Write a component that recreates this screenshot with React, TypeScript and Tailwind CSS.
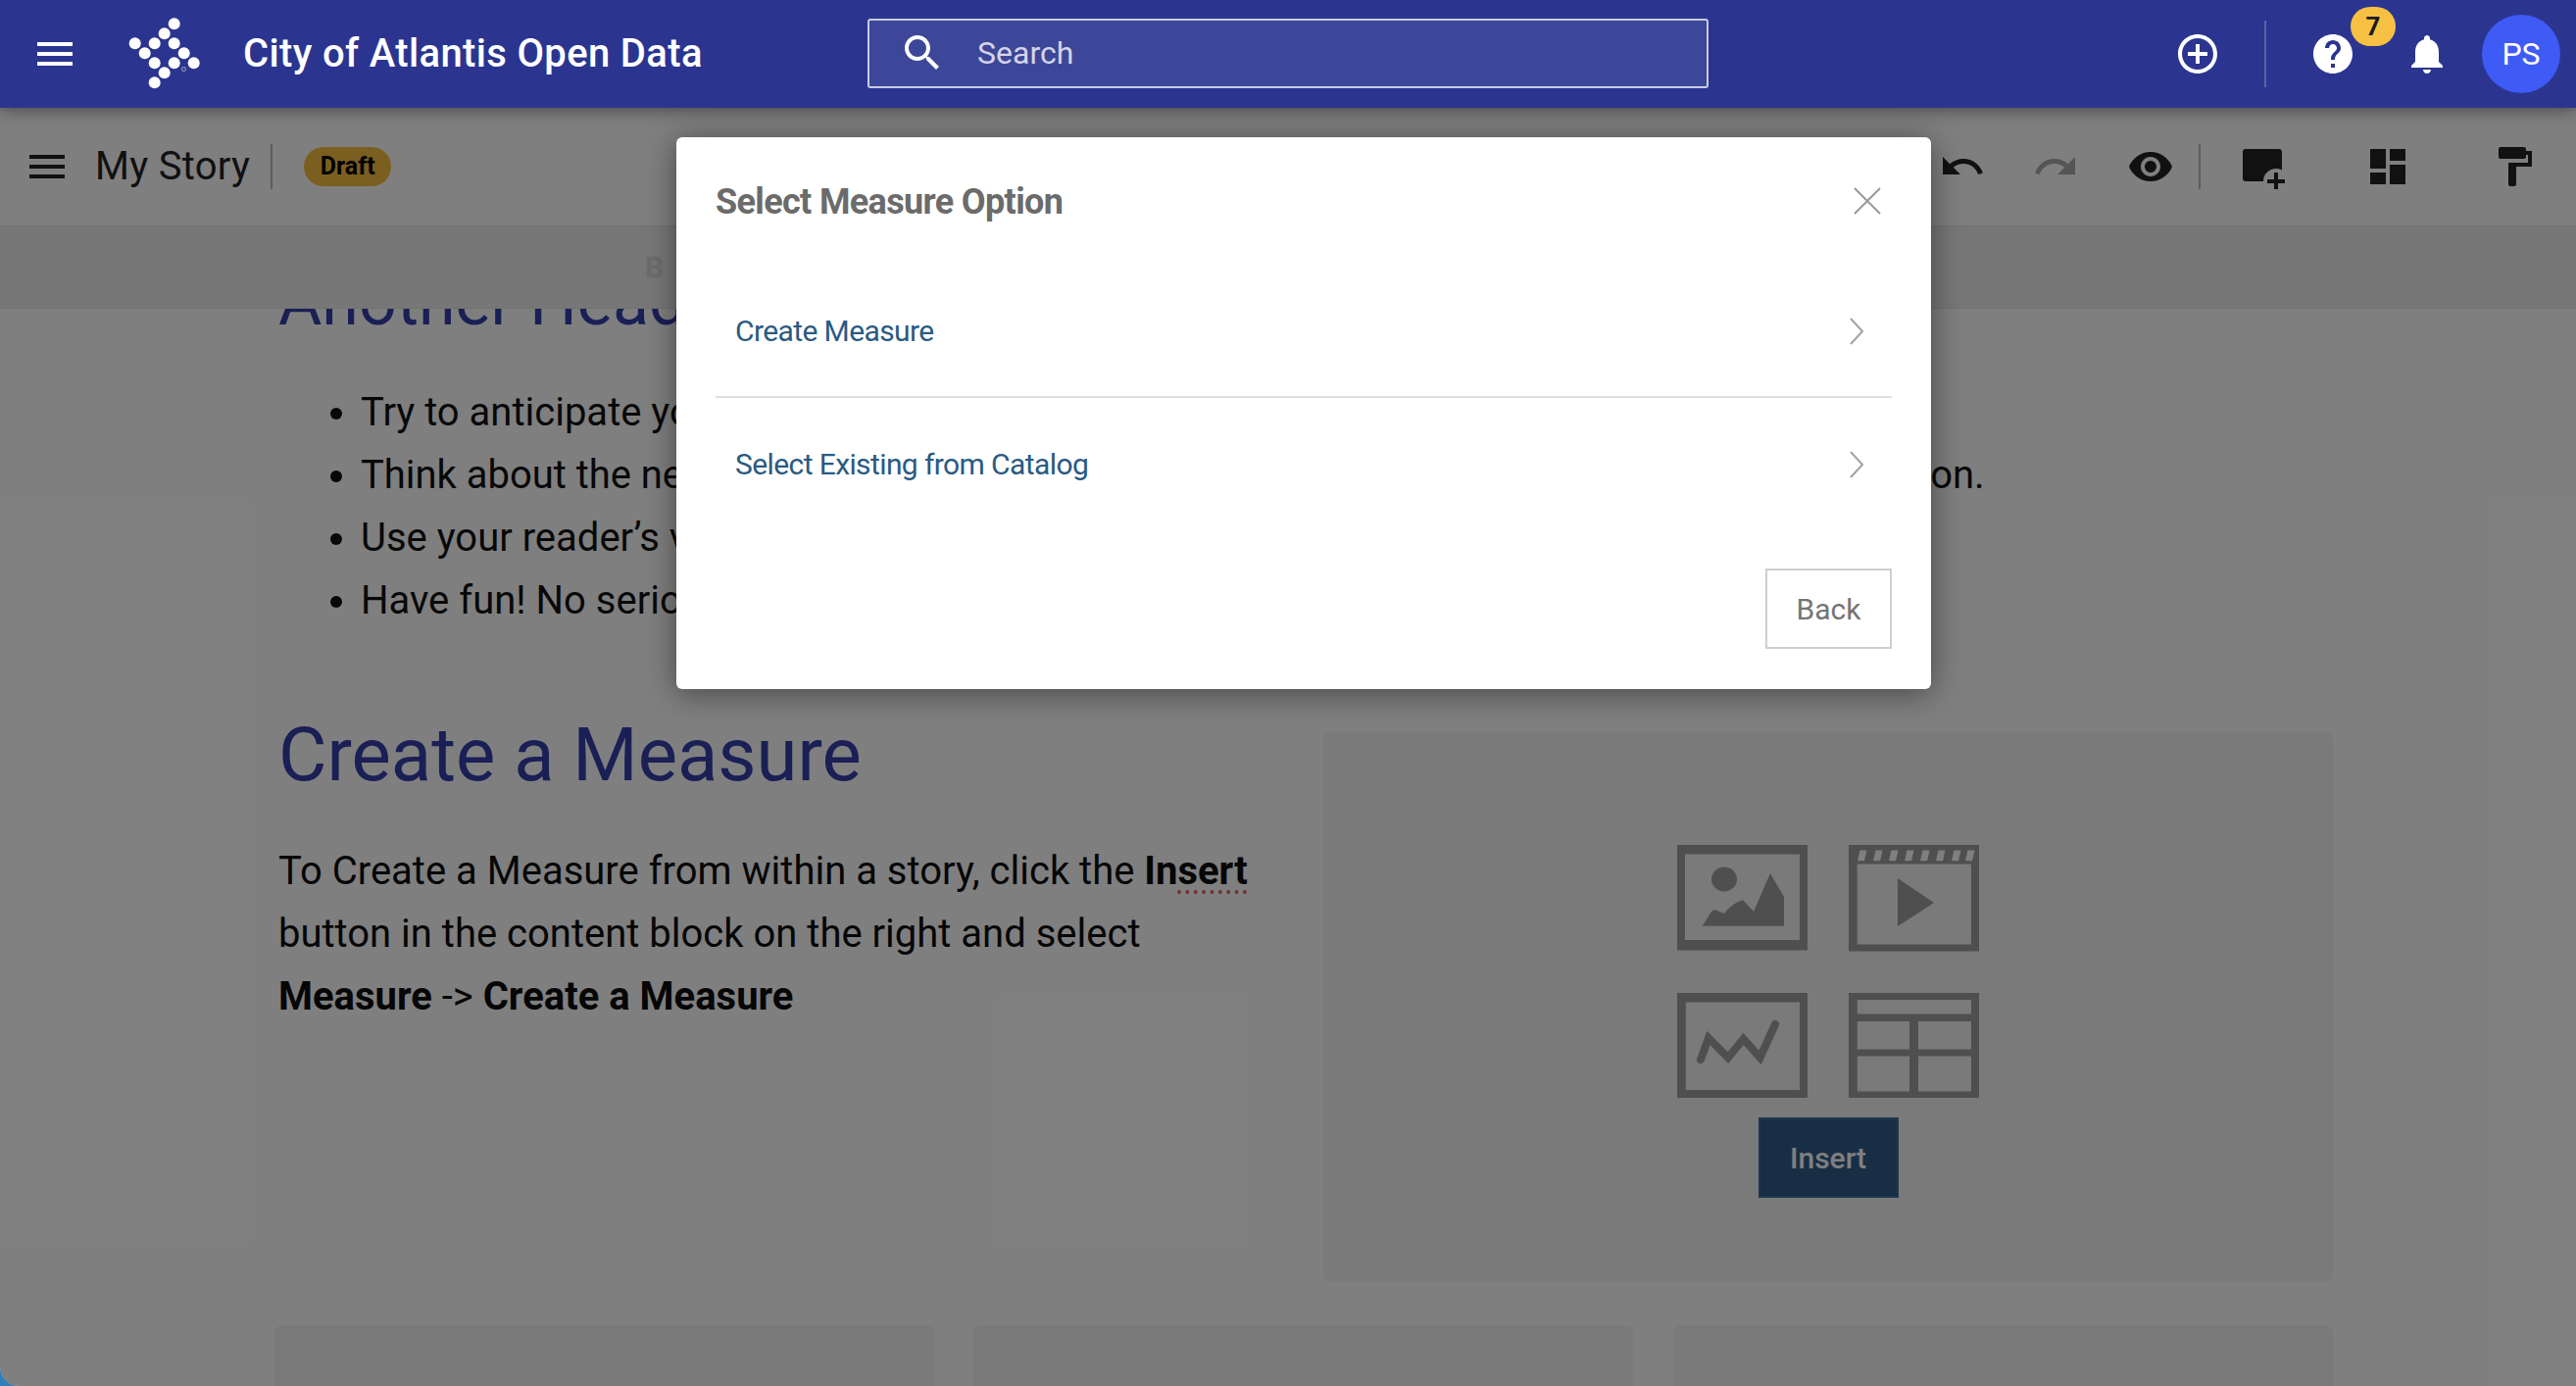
import React from "react";

type IconProps = { d: string; className?: string; size?: number };

const Icon = ({ d, className = "", size = 48 }: IconProps) => (
  <svg viewBox="0 0 24 24" width={size} height={size} fill="currentColor" className={`shrink-0 ${className}`}>
    <path d={d} />
  </svg>
);

const MENU = "M3 18h18v-2H3v2zm0-5h18v-2H3v2zm0-7v2h18V6H3z";
const SEARCH =
  "M15.5 14h-.79l-.28-.27C15.41 12.59 16 11.11 16 9.5 16 5.91 13.09 3 9.5 3S3 5.91 3 9.5 5.91 16 9.5 16c1.61 0 3.09-.59 4.23-1.57l.27.28v.79l5 4.99L20.49 19l-4.99-5zm-6 0C7.01 14 5 11.99 5 9.5S7.01 5 9.5 5 14 7.01 14 9.5 11.99 14 9.5 14z";
const ADD_CIRCLE =
  "M13 7h-2v4H7v2h4v4h2v-4h4v-2h-4V7zm-1-5C6.48 2 2 6.48 2 12s4.48 10 10 10 10-4.48 10-10S17.52 2 12 2zm0 18c-4.41 0-8-3.59-8-8s3.59-8 8-8 8 3.59 8 8-3.59 8-8 8z";
const HELP =
  "M12 2C6.48 2 2 6.48 2 12s4.48 10 10 10 10-4.48 10-10S17.52 2 12 2zm1 17h-2v-2h2v2zm2.07-7.75l-.9.92C13.45 12.9 13 13.5 13 15h-2v-.5c0-1.1.45-2.1 1.17-2.83l1.24-1.26c.37-.36.59-.86.59-1.41 0-1.1-.9-2-2-2s-2 .9-2 2H8c0-2.21 1.79-4 4-4s4 1.79 4 4c0 .88-.36 1.68-.93 2.25z";
const BELL =
  "M12 22c1.1 0 2-.9 2-2h-4c0 1.1.89 2 2 2zm6-6v-5c0-3.07-1.64-5.64-4.5-6.32V4c0-.83-.67-1.5-1.5-1.5s-1.5.67-1.5 1.5v.68C7.63 5.36 6 7.92 6 11v5l-2 2v1h16v-1l-2-2z";
const UNDO =
  "M12.5 8c-2.65 0-5.05.99-6.9 2.6L2 7v9h9l-3.62-3.62c1.39-1.16 3.16-1.88 5.12-1.88 3.54 0 6.55 2.31 7.6 5.5l2.37-.78C21.08 11.03 17.15 8 12.5 8z";
const REDO =
  "M18.4 10.6C16.55 8.99 14.15 8 11.5 8c-4.65 0-8.58 3.03-9.96 7.22L3.9 16c1.05-3.19 4.05-5.5 7.6-5.5 1.95 0 3.73.72 5.12 1.88L13 16h9V7l-3.6 3.6z";
const EYE =
  "M12 4.5C7 4.5 2.73 7.61 1 12c1.73 4.39 6 7.5 11 7.5s9.27-3.11 11-7.5c-1.73-4.39-6-7.5-11-7.5zM12 17c-2.76 0-5-2.24-5-5s2.24-5 5-5 5 2.24 5 5-2.24 5-5 5zm0-8c-1.66 0-3 1.34-3 3s1.34 3 3 3 3-1.34 3-3-1.34-3-3-3z";
const DASHBOARD = "M3 13h8V3H3v10zm0 8h8v-6H3v6zm10 0h8V11h-8v10zm0-18v6h8V3h-8z";
const ROLLER =
  "M18 4V3c0-.55-.45-1-1-1H5c-.55 0-1 .45-1 1v4c0 .55.45 1 1 1h12c.55 0 1-.45 1-1V6h1v4H9v11c0 .55.45 1 1 1h2c.55 0 1-.45 1-1v-9h8V4h-3z";

const LOGO_DOTS: [number, number][] = [
  [47.7, 9.3],
  [37.7, 19.3],
  [7.7, 29.3],
  [27.7, 29.3],
  [47.7, 29.3],
  [17.7, 39.3],
  [57.7, 39.3],
  [27.7, 49.3],
  [47.7, 49.3],
  [67.7, 49.3],
  [37.7, 59.3],
  [27.7, 69.3],
];

const Logo = () => (
  <svg viewBox="0 0 80 80" width={80} height={80} className="shrink-0 ml-[50px]">
    {LOGO_DOTS.map(([x, y]) => (
      <circle key={`${x}-${y}`} cx={x} cy={y} r={6} fill="#fff" />
    ))}
    <circle cx={57.5} cy={55.5} r={2} fill="none" stroke="#aab" strokeWidth={1} />
  </svg>
);

const AddBlock = () => (
  <svg viewBox="0 0 48 48" width={48} height={48} className="shrink-0 ml-[40px]">
    <rect x={3} y={6} width={40} height={33} rx={3} fill="#222" />
    <circle cx={37} cy={39} r={13} fill="#fff" />
    <path d="M35 30h4v7h7v4h-7v6h-4v-6h-7v-4h7z" fill="#222" />
  </svg>
);

const PictureIcon = () => (
  <svg viewBox="0 0 133 107.5" className="w-[133px] h-[107.5px]">
    <path fillRule="evenodd" fill="#9e9e9e" d="M0 0h133v107.5H0zM8 9.5v87.5h117V9.5z" />
    <ellipse cx={48} cy={35} rx={13} ry={12.5} fill="#9e9e9e" />
    <path d="M25.7 82.7 35 68q3-3 6-1l7 3q6-9 19-14l11 12 17-39 14 24v29.7z" fill="#9e9e9e" />
  </svg>
);

const VideoIcon = () => (
  <svg viewBox="0 0 133 108.5" className="w-[133px] h-[108.5px]">
    <path fillRule="evenodd" fill="#9e9e9e" d="M0 0h133v108.5H0zM8.7 19.5v82h116.3v-82z" />
    {[10, 26, 42, 58, 74, 90, 106, 120].map((x) => (
      <path key={x} d="M0 16.3 2.5 5.5h7L7 16.3z" transform={`translate(${x - 1} 0)`} fill="#fff" />
    ))}
    <path d="M50 34 87 59 50 83z" fill="#9e9e9e" />
  </svg>
);

const ChartIcon = () => (
  <svg viewBox="0 0 133 107.5" className="w-[133px] h-[107.5px]">
    <path fillRule="evenodd" fill="#9e9e9e" d="M0 0h133v107.5H0zM8.8 9.5V99H125V9.5z" />
    <path
      d="M24 68 32 46 52 66 67.6 47 84.6 66 100 32"
      fill="none"
      stroke="#9e9e9e"
      strokeWidth={8}
      strokeLinecap="round"
    />
  </svg>
);

const TableIcon = () => (
  <svg viewBox="0 0 133 107.5" className="w-[133px] h-[107.5px]">
    <path
      fillRule="evenodd"
      fill="#9e9e9e"
      d="M0 0h133v107.5H0zM8.8 7v14.5H125V7zM8.8 29v28.6H62V29zM71 29v28.6h54V29zM8.8 64.5v36.1H62V64.5zM71 64.5v36.1h54V64.5z"
    />
  </svg>
);

const RowChevron = () => (
  <svg viewBox="0 0 14 28" width={14} height={28} className="shrink-0" fill="none" stroke="#a3a3a3" strokeWidth={2}>
    <path d="M1 1l12 13L1 27" />
  </svg>
);

const ModalRow = ({ label, border }: { label: string; border?: boolean }) => (
  <div className={`flex items-center justify-between pl-[20px] pr-[29px] h-[135px] ${border ? "border-b-2 border-[#dedede]" : ""}`}>
    <span className="text-[30px] tracking-[-0.6px] text-[#2a5a82]">{label}</span>
    <RowChevron />
  </div>
);

export default function App() {
  return (
    <div className="relative w-[2628px] h-[1414px] overflow-hidden bg-[#2f7fb8] font-[Roboto,sans-serif]">
      <div className="w-full h-full flex flex-col bg-white overflow-hidden rounded-bl-[20px]">
        <header className="relative z-20 h-[110px] shrink-0 flex items-center pl-[32px] pr-[16px] bg-[#2b3590] text-white shadow-[0_2px_16px_rgba(0,0,0,0.45)]">
          <Icon d={MENU} />
          <Logo />
          <div className="w-[675px] shrink-0 pl-[38px] text-[40px] tracking-[0.35px] font-medium whitespace-nowrap">City of Atlantis Open Data</div>
          <div className="w-[858px] h-[71px] -mt-[2px] shrink-0 flex items-center border-2 border-[#c9cce4] rounded-[3px] bg-[#3d4799] pl-[30px]">
            <Icon d={SEARCH} />
            <span className="ml-[32px] text-[32px] text-[#d3d5e8]">Search</span>
          </div>
          <div className="ml-auto flex items-center">
            <Icon d={ADD_CIRCLE} />
            <div className="w-[2px] h-[68px] bg-[#5a63a8] ml-[44px] mr-[44px]" />
            <div className="relative">
              <Icon d={HELP} />
              <span className="absolute left-[42px] -top-[24px] w-[46px] h-[40px] rounded-[20px] bg-[#f6c143] flex items-center justify-center text-[26px] font-bold text-[#1c1c1c]">
                7
              </span>
            </div>
            <Icon d={BELL} className="ml-[48px]" />
            <div className="ml-[32px] w-[80px] h-[80px] rounded-full bg-[#3f5bf6] flex items-center justify-center text-[32px]">PS</div>
          </div>
        </header>

        <div className="h-[120px] shrink-0 flex items-center pl-[24px] pr-[39px] text-[#222]">
          <Icon d={MENU} />
          <span className="ml-[25px] text-[40px] tracking-[0.3px]">My Story</span>
          <div className="ml-[21px] w-[2px] h-[46px] bg-[#bbb]" />
          <span className="ml-[32px] w-[89px] h-[40px] rounded-[20px] bg-[#f6bf40] flex items-center justify-center text-[25px] font-bold text-black">
            Draft
          </span>
          <div className="ml-auto flex items-center">
            <Icon d={UNDO} />
            <Icon d={REDO} className="ml-[47px] text-[#aaa]" />
            <Icon d={EYE} className="ml-[49px]" />
            <div className="ml-[25px] w-[2px] h-[46px] bg-[#bbb]" />
            <AddBlock />
            <Icon d={DASHBOARD} className="ml-[79px]" />
            <Icon d={ROLLER} className="ml-[81px]" />
          </div>
        </div>

        <div className="h-[85px] shrink-0 flex items-center pl-[658px] bg-[#eee] border-y border-[#e2e2e2]">
          <span className="text-[30px] font-bold text-[#d8d8d8]">B</span>
        </div>

        <main className="flex-1 min-h-0 overflow-hidden pl-[280px] pr-[248px]">
          <h2 className="-mt-[50px] pl-[4px] text-[68px] leading-[86px] text-[#343eaa]">Another Heading</h2>
          <ul className="mt-[38px] pl-[88px] list-disc text-[40px] leading-[64px] text-[#111]">
            <li>Try to anticipate your reader’s questions before they ask them.</li>
            <li className="tracking-[-0.03px]">Think about the needs of your audience and which questions they might have the information.</li>
            <li>Use your reader’s voice when you write.</li>
            <li>Have fun! No serious story needs to be boring.</li>
          </ul>

          <div className="mt-[102px] grid grid-cols-[1fr_1030px] gap-x-[40px]">
            <div className="pl-[4px] -mt-[20px]">
              <h2 className="text-[76px] leading-[86px] text-[#343eaa]">Create a Measure</h2>
              <p className="mt-[44px] text-[40px] leading-[64px] text-[#0c0c0c] w-[1020px]">
                To Create a Measure from within a story, click the{" "}
                <strong className="font-bold">
                  In<span className="underline decoration-dotted decoration-[4px] underline-offset-[6px] decoration-[#e06060]">sert</span>
                </strong>
                <br />
                button in the content block on the right and select
                <br />
                <strong className="font-bold">Measure</strong> -&gt; <strong className="font-bold">Create a Measure</strong>
              </p>
            </div>
            <div className="h-[561px] rounded-[8px] bg-[#f4f4f4] flex flex-col items-center pt-[115px]">
              <div className="grid grid-cols-[133px_133px] gap-x-[42px] gap-y-[42px]">
                <PictureIcon />
                <VideoIcon />
                <ChartIcon />
                <TableIcon />
              </div>
              <button className="mt-[20px] w-[143px] h-[82px] bg-[#305c88] border-2 border-[#3f6f9e] text-white text-[30px] font-medium">
                Insert
              </button>
            </div>
          </div>

          <div className="mt-[44px] grid grid-cols-3 gap-x-[40px] h-[200px]">
            <div className="rounded-[8px] bg-[#f4f4f4]" />
            <div className="rounded-[8px] bg-[#f4f4f4]" />
            <div className="rounded-[8px] bg-[#f4f4f4]" />
          </div>
        </main>
      </div>

      <div className="absolute inset-x-0 top-[110px] bottom-0 z-10 bg-black/50 rounded-bl-[20px]" />

      <div className="absolute z-30 left-[690px] top-[140px] w-[1280px] h-[563px] rounded-[6px] bg-white shadow-[0_4px_32px_rgba(0,0,0,0.45)] px-[40px]">
        <div className="h-[131px] flex items-center justify-between">
          <h3 className="text-[36px] tracking-[-0.65px] font-bold text-[#6b6b6b]">Select Measure Option</h3>
          <svg viewBox="0 0 28 28" width={28} height={28} className="mr-[11px] -mt-[2px]" fill="none" stroke="#999" strokeWidth={2}>
            <path d="M1 1l26 26M27 1L1 27" />
          </svg>
        </div>
        <ModalRow label="Create Measure" border />
        <ModalRow label="Select Existing from Catalog" />
        <div className="mt-[39px] flex justify-end">
          <button className="w-[129px] h-[82px] border-2 border-[#cfcfcf] text-[30px] text-[#757575]">Back</button>
        </div>
      </div>
    </div>
  );
}
